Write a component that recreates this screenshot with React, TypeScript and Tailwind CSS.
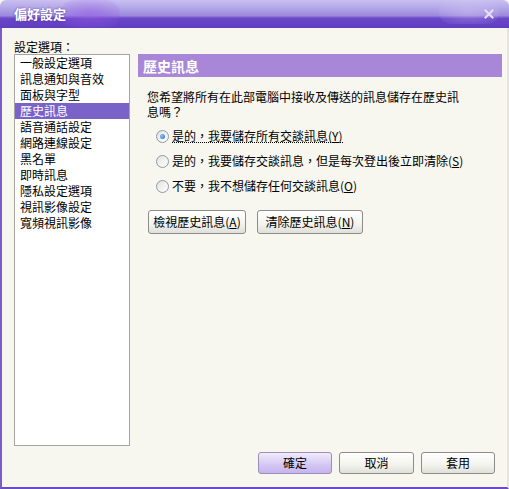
import React from "react";

const items = [
  "一般設定選項",
  "訊息通知與音效",
  "面板與字型",
  "歷史訊息",
  "語音通話設定",
  "網路連線設定",
  "黑名單",
  "即時訊息",
  "隱私設定選項",
  "視訊影像設定",
  "寬頻視訊影像",
];

function Radio({ checked }: { checked?: boolean }) {
  return (
    <span className="flex h-[13px] w-[13px] shrink-0 items-center justify-center rounded-full border border-[#8a9bb0] bg-[linear-gradient(135deg,#e2e2dc,#ffffff)]">
      {checked && (
        <span className="h-[5px] w-[5px] rounded-full bg-[radial-gradient(circle_at_35%_35%,#8fc0f0,#2a6fc0)]" />
      )}
    </span>
  );
}

function Btn({
  children,
  className,
  primary,
}: {
  children: React.ReactNode;
  className?: string;
  primary?: boolean;
}) {
  return (
    <div
      className={
        "flex items-center justify-center rounded-[3px] border text-[12px] text-black " +
        (primary
          ? "border-[#9a8fb8] bg-[linear-gradient(to_bottom,#f1ecfb,#d4c6f3_60%,#c6b3ee)] "
          : "border-[#8c8c8c] bg-[linear-gradient(to_bottom,#ffffff,#f3f3ee_60%,#e0e0da)] ") +
        (className ?? "")
      }
    >
      {children}
    </div>
  );
}

export default function App() {
  return (
    <div className="flex h-[489px] w-[509px] flex-col overflow-hidden bg-[#f7f6ef] font-['Noto_Sans_CJK_TC','Noto_Sans',sans-serif] text-[12px] leading-[14px] text-black">
      {/* title bar */}
      <div className="relative flex h-[28px] shrink-0 items-center justify-between rounded-t-[6px] bg-[linear-gradient(to_bottom,#c9c0f0_0%,#b2a5e6_30%,#9d8ade_55%,#6a46c8_66%,#5f3ec0_100%)] px-[14px]">
        <div className="pointer-events-none absolute left-[60px] top-0 h-[28px] w-[60px] rounded-full bg-[radial-gradient(ellipse_at_center,rgba(150,90,230,0.55),rgba(150,90,230,0))]" />
        <div className="pointer-events-none absolute right-[10px] top-0 h-[24px] w-[60px] rounded-full bg-[radial-gradient(ellipse_at_center,rgba(220,210,250,0.35),rgba(220,210,250,0))]" />
        <span className="relative text-[13px] font-bold leading-[14px] text-white [text-shadow:0_0_2px_rgba(60,30,140,0.7)]">
          偏好設定
        </span>
        <svg width="10" height="10" viewBox="0 0 10 10" className="relative mr-[1px]">
          <path d="M1.5 1.5 L8.5 8.5 M8.5 1.5 L1.5 8.5" stroke="#e6e2f2" strokeWidth="2" strokeLinecap="square" />
        </svg>
      </div>

      {/* body */}
      <div className="flex flex-1 flex-col border-b-2 border-l-2 border-r-2 border-b-[#6a4cc6] border-l-[#7a5cc8] border-r-[#e6e4da]">
        <div className="flex pl-[12px] pt-[12px]">
          {/* left column */}
          <div className="flex w-[116px] flex-col">
            <div className="h-[14px] leading-[14px]">設定選項：</div>
            <div className="h-[392px] border border-[#a5a5a5] bg-white">
              {items.map((it) => (
                <div
                  key={it}
                  className={
                    "flex h-[16px] items-center pl-[5px] leading-[14px] " +
                    (it === "歷史訊息" ? "bg-[#7a63c8] text-white" : "")
                  }
                >
                  {it}
                </div>
              ))}
            </div>
          </div>

          {/* right column */}
          <div className="ml-[8px] flex flex-col pt-[14px]">
            <div className="flex h-[23px] w-[364px] items-center bg-[#a887d8] pl-[5px]">
              <span className="text-[14px] font-bold leading-[16px] text-white">歷史訊息</span>
            </div>
            <div className="ml-[9px] mt-[12px] flex flex-col leading-[15px]">
              <div className="h-[15px]">您希望將所有在此部電腦中接收及傳送的訊息儲存在歷史訊</div>
              <div className="h-[15px]">息嗎？</div>
            </div>
            <div className="ml-[18px] mt-[10px] flex flex-col gap-[11px]">
              <div className="flex h-[14px] items-center gap-[3px]">
                <Radio checked />
                <span className="border-b border-dotted border-black leading-[13px]">
                  是的，我要儲存所有交談訊息(<span className="underline">Y</span>)
                </span>
              </div>
              <div className="flex h-[14px] items-center gap-[3px]">
                <Radio />
                <span>
                  是的，我要儲存交談訊息，但是每次登出後立即清除(<span className="underline">S</span>)
                </span>
              </div>
              <div className="flex h-[14px] items-center gap-[3px]">
                <Radio />
                <span>
                  不要，我不想儲存任何交談訊息(<span className="underline">O</span>)
                </span>
              </div>
            </div>
            <div className="ml-[10px] mt-[17px] flex gap-[11px]">
              <Btn className="h-[24px] w-[98px]">
                檢視歷史訊息(<span className="underline">A</span>)
              </Btn>
              <Btn className="h-[24px] w-[106px]">
                清除歷史訊息(<span className="underline">N</span>)
              </Btn>
            </div>
          </div>
        </div>

        {/* bottom buttons */}
        <div className="mt-[6px] flex justify-end gap-[7px] pr-[12px]">
          <Btn primary className="h-[22px] w-[74px]">確定</Btn>
          <Btn className="h-[22px] w-[75px]">取消</Btn>
          <Btn className="h-[22px] w-[74px]">套用</Btn>
        </div>
      </div>
    </div>
  );
}
